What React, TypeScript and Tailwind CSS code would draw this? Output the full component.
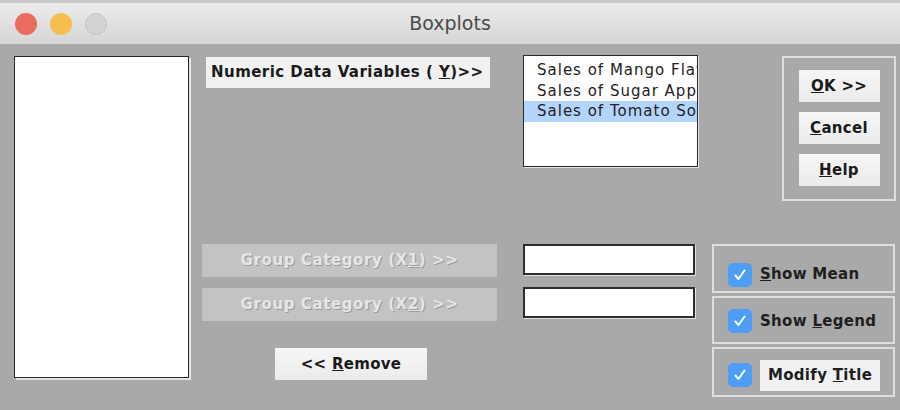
import React from 'react';

const font = "font-['DejaVu_Sans','Liberation_Sans',sans-serif]";

const Check = () => (
  <div className="w-[24px] h-[24px] shrink-0 rounded-[5px] bg-[#4b9df6] flex items-center justify-center">
    <svg width="16" height="16" viewBox="0 0 16 16">
      <path d="M3.5 8.5 L6.5 12 L12.5 3.5" fill="none" stroke="white" strokeWidth="2" strokeLinecap="round" strokeLinejoin="round" />
    </svg>
  </div>
);

const MacButton = ({ children, className = '' }: { children: React.ReactNode; className?: string }) => (
  <div className={`bg-gradient-to-b from-[#f6f6f6] to-[#ebebeb] flex items-center justify-center font-bold text-[15px] tracking-[0.3px] text-[#1a1a1a] ${className}`}>
    <span>{children}</span>
  </div>
);

const DisabledButton = ({ label, key1 }: { label: string; key1: string }) => (
  <div className="w-[295px] h-[33px] bg-[#c3c3c3] flex items-center justify-center font-bold text-[15px] tracking-[0.6px] text-[#e6e6e6] [text-shadow:1px_1px_0_#9a9a9a]">
    <span>{label} (X<u>{key1}</u>) &gt;&gt;</span>
  </div>
);

const CheckPanel = ({ children, className = '' }: { children: React.ReactNode; className?: string }) => (
  <div className={`w-[183px] border-2 border-[#dedede] flex items-center pl-[14px] gap-[8px] ${className}`}>
    {children}
  </div>
);

export default function App() {
  return (
    <div className={`w-[900px] h-[410px] bg-[#a9a9a9] flex flex-col overflow-hidden ${font}`}>
      {/* Title bar */}
      <div className="h-[44px] shrink-0 bg-gradient-to-b from-[#ececec] to-[#d5d5d5] border-t-[3px] border-[#c9c9c9] relative flex items-center justify-center">
        <div className="absolute left-[15px] top-[10px] flex gap-[13px]">
          <div className="w-[22px] h-[22px] rounded-full bg-[#ec6b5f]" />
          <div className="w-[22px] h-[22px] rounded-full bg-[#f5bf4f]" />
          <div className="w-[22px] h-[22px] rounded-full bg-[#d3d3d3] border border-[#c4c4c4]" />
        </div>
        <span className="text-[19px] text-[#4a4a4a]">Boxplots</span>
      </div>

      {/* Body */}
      <div className="flex items-start">
        {/* Source list */}
        <div className="ml-[14px] mt-[12px] w-[175px] h-[322px] bg-white border border-[#2a2a2a] shadow-[2px_2px_0_#e2e2e2]" />

        {/* Middle column */}
        <div className="ml-[13px] w-[296px] flex flex-col">
          <div className="ml-[4px] mt-[13px] w-[284px] h-[31px] bg-[#f1f1f1] flex items-center pl-[5px] font-bold text-[15px] tracking-[0.45px] text-[#1a1a1a] whitespace-nowrap">
            <span>Numeric Data Variables (&nbsp;<u>Y</u>)&gt;&gt;</span>
          </div>
          <div className="mt-[156px] flex flex-col gap-[11px]">
            <DisabledButton label="Group Category" key1="1" />
            <DisabledButton label="Group Category" key1="2" />
          </div>
          <MacButton className="ml-[73px] mt-[27px] w-[152px] h-[32px]">
            &lt;&lt;&nbsp;<u>R</u>emove
          </MacButton>
        </div>

        {/* Targets column */}
        <div className="ml-[25px] w-[176px] flex flex-col">
          <div className="mt-[11px] w-[175px] h-[112px] bg-white border border-[#2a2a2a] shadow-[1px_1px_0_#e2e2e2] pt-[4px] text-[15px] tracking-[1px] text-[#222] leading-[20.5px] overflow-hidden whitespace-nowrap">
            <div className="pl-[13px]">Sales of Mango Flavor</div>
            <div className="pl-[13px]">Sales of Sugar Apple</div>
            <div className="pl-[13px] bg-[#b4d5fb]">Sales of Tomato Soup</div>
          </div>
          <div className="mt-[77px] flex flex-col gap-[12px]">
            <div className="w-[172px] h-[31px] bg-white border-2 border-[#2e2e2e] shadow-[1px_1px_0_#e2e2e2]" />
            <div className="w-[172px] h-[31px] bg-white border-2 border-[#2e2e2e] shadow-[1px_1px_0_#e2e2e2]" />
          </div>
        </div>

        {/* Right column */}
        <div className="ml-[13px] w-[184px] flex flex-col items-end">
          <div className="mt-[12px] w-[114px] h-[145px] border-2 border-[#dedede] flex flex-col items-center pt-[12px] gap-[10px]">
            <MacButton className="w-[81px] h-[32px]"><u>O</u>K &gt;&gt;</MacButton>
            <MacButton className="w-[81px] h-[32px]"><u>C</u>ancel</MacButton>
            <MacButton className="w-[81px] h-[32px]"><u>H</u>elp</MacButton>
          </div>
          <div className="mt-[43px] flex flex-col gap-[3px] self-start">
            <CheckPanel className="h-[49px] pt-[12px]">
              <Check />
              <span className="font-bold text-[15px] tracking-[0.3px] text-[#1e1e1e] whitespace-nowrap"><u>S</u>how Mean</span>
            </CheckPanel>
            <CheckPanel className="h-[48px] pt-[2px]">
              <Check />
              <span className="font-bold text-[15px] tracking-[0.3px] text-[#1e1e1e] whitespace-nowrap">Show <u>L</u>egend</span>
            </CheckPanel>
            <CheckPanel className="h-[50px] pt-[6px]">
              <Check />
              <div className="bg-[#f1f1f1] px-[8px] h-[31px] flex items-center font-bold text-[15px] tracking-[0.3px] text-[#1e1e1e] whitespace-nowrap">
                <span>Modify <u>T</u>itle</span>
              </div>
            </CheckPanel>
          </div>
        </div>
      </div>
    </div>
  );
}
